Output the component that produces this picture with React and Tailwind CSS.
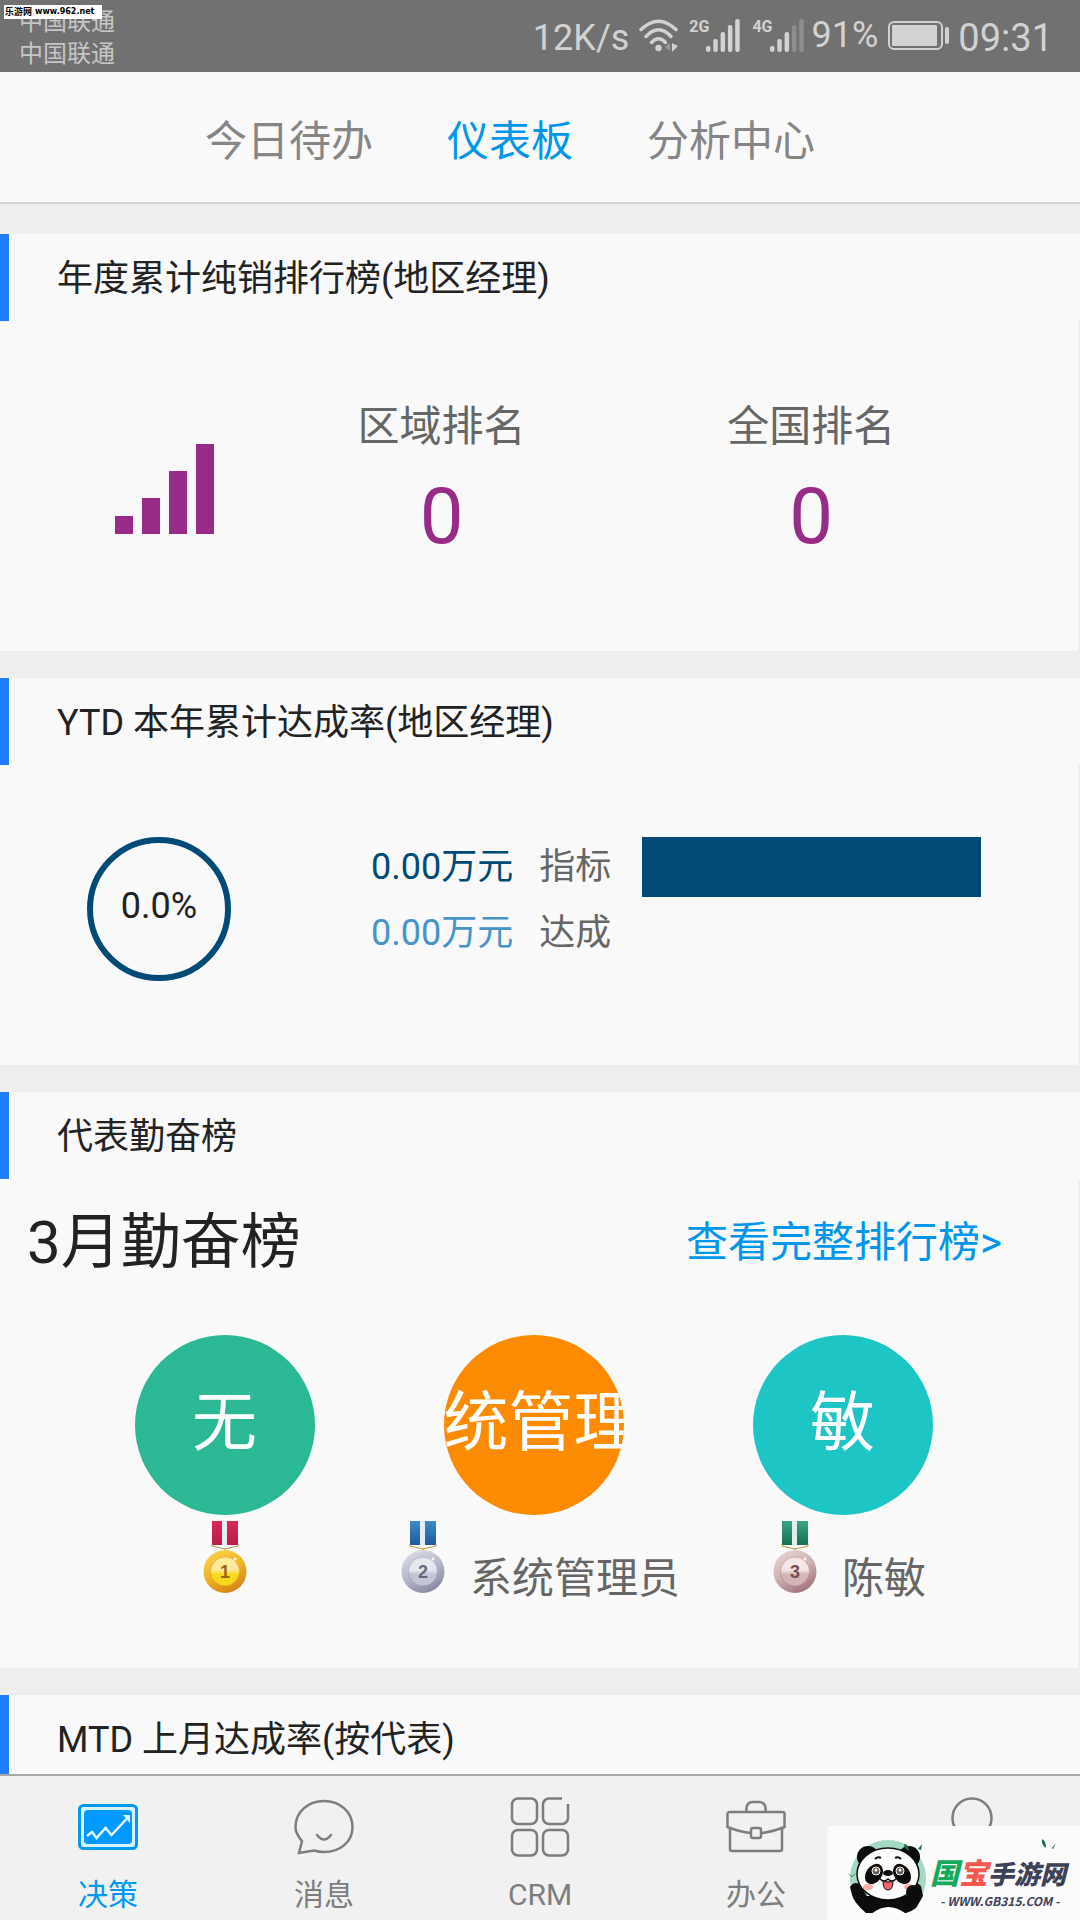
import React, { useState } from 'react';

const tabs = ['今日待办', '仪表板', '分析中心'];

const reps = [
  { rank: 1, initial: '无', name: '', circle: 'bg-[#2bb894]' },
  { rank: 2, initial: '统管理员', name: '系统管理员', circle: 'bg-[#fd8b01]' },
  { rank: 3, initial: '敏', name: '陈敏', circle: 'bg-[#1dc5c5]' },
];

const medalColors = {
  1: { ribbonTop: '#d9285c', ribbonEnd: '#b81d4b', light: '#fbd44c', mid: '#f0b323', dark: '#d5811b', inner: '#f6d91b', innerTop: '#fdeb9a', digit: '#a0621a' },
  2: { ribbonTop: '#3c8cc8', ribbonEnd: '#1c5a9c', light: '#dcdde8', mid: '#b7b8cb', dark: '#85869e', inner: '#c3c5d6', innerTop: '#e6e8f0', digit: '#66687c' },
  3: { ribbonTop: '#3aa485', ribbonEnd: '#14714f', light: '#e6d6d4', mid: '#cdb0b0', dark: '#a26f7c', inner: '#d3b6b6', innerTop: '#f3e6e4', digit: '#7b4c52' },
};

function Medal({ rank }) {
  const c = medalColors[rank];
  return (
    <svg className="w-[72px] h-[72px] shrink-0" viewBox="0 0 72 72" role="img" aria-label={`第${rank}名`}>
      <defs>
        <linearGradient id={`ribbon${rank}`} x1="0" y1="0" x2="0" y2="1">
          <stop offset="0" stopColor={c.ribbonTop} />
          <stop offset="1" stopColor={c.ribbonEnd} />
        </linearGradient>
        <linearGradient id={`disc${rank}`} x1="0.2" y1="0" x2="0.7" y2="1">
          <stop offset="0" stopColor={c.light} />
          <stop offset="0.5" stopColor={c.mid} />
          <stop offset="1" stopColor={c.dark} />
        </linearGradient>
        <linearGradient id={`inner${rank}`} x1="0" y1="0" x2="0" y2="1">
          <stop offset="0" stopColor={c.innerTop} />
          <stop offset="0.45" stopColor={c.innerTop} />
          <stop offset="0.6" stopColor={c.inner} />
          <stop offset="1" stopColor={c.inner} />
        </linearGradient>
      </defs>
      <rect x="23" y="0" width="26" height="24" fill={`url(#ribbon${rank})`} />
      <rect x="33" y="0" width="5" height="24" fill="#e4ecef" />
      <path d="M23 23v2l13 3 13-3v-2M36 27v3" fill="none" stroke="#b99a4a" strokeWidth="1" />
      <circle cx="36" cy="50.500" r="21.500" fill={`url(#disc${rank})`} />
      <circle cx="36" cy="50.500" r="14.500" fill={`url(#inner${rank})`} stroke={c.dark} strokeOpacity="0.4" strokeWidth="1" />
      <circle cx="46" cy="38" r="1.500" fill="#fff" fillOpacity="0.9" />
      <text x="36" y="57" textAnchor="middle" fontSize="18" fontWeight="700" fontFamily="Liberation Sans, sans-serif" fill={c.digit}>{rank}</text>
    </svg>
  );
}

function Signal({ label, level }) {
  const bars = [6, 13, 20, 27, 33];
  return (
    <div className="flex items-start">
      <span className="text-[16px] leading-[16px] font-bold">{label}</span>
      <svg className="w-[34px] h-[33px] -ml-[3px]" viewBox="0 0 34 33" aria-hidden="true">
        {bars.map((h, i) => (
          <rect key={h} x={i * 7.3} y={33 - h} width="4.500" height={h} rx="2" fill="currentColor" fillOpacity={i < level ? 1 : 0.3} />
        ))}
      </svg>
    </div>
  );
}

function StatusBar() {
  return (
    <header className="relative flex justify-between h-[72px] shrink-0 bg-[#717171] text-[#d2d2d2] pl-[19px] pr-[27px]">
      <div className="pt-[6px] text-[24px] leading-[32px] text-[#c6c6c6]">
        <p>中国联通</p>
        <p>中国联通</p>
      </div>
      <div className="absolute left-[4px] top-[5px] flex items-center gap-[3px] h-[14px] w-[98px] pl-px bg-white text-black text-[9px] leading-[14px] font-bold whitespace-nowrap font-['DejaVu_Sans','Noto_Sans_CJK_SC',sans-serif]">
        <span>乐游网</span>
        <span className="text-[8px]">www.962.net</span>
      </div>
      <div className="flex items-start pt-[19px]">
        <span className="text-[36px] leading-[38px] mr-[10px]">12K/s</span>
        <svg className="w-10 h-[33px] mr-[10px]" viewBox="0 0 40 33" fill="none" stroke="currentColor" strokeWidth="3.500" strokeLinecap="round" aria-hidden="true">
          <path d="M2 10.500Q19.500-6 37 10.500" />
          <path d="M7 17.500Q19.500 4 32 17.500" />
          <path d="M12.500 23.500Q19.500 16 26.500 23.500" />
          <circle cx="19.500" cy="29" r="3.200" fill="currentColor" stroke="none" />
          <path d="M31 24v8l-5-4z" fill="#999" stroke="none" />
          <path d="M33 24v9l6-6z" fill="currentColor" stroke="none" />
        </svg>
        <Signal label="2G" level={5} />
        <div className="w-3" />
        <Signal label="4G" level={3} />
        <span className="text-[36px] leading-[32px] ml-2 mr-[10px]">91%</span>
        <svg className="w-[61px] h-[33px] mr-[9px]" viewBox="0 0 61 33" fill="none" aria-hidden="true">
          <rect x="1" y="3" width="53" height="27" rx="5" stroke="currentColor" strokeWidth="2" />
          <rect x="4" y="6" width="45" height="21" rx="1" fill="currentColor" />
          <rect x="57" y="8" width="4" height="17" rx="2" fill="currentColor" />
        </svg>
        <span className="text-[38px] leading-[38px]">09:31</span>
      </div>
    </header>
  );
}

function Section({ title, children }) {
  return (
    <section>
      <div className="flex items-center h-[87px] border-l-[9px] border-[#217dfa] bg-[#f9f9f9] pl-12 pt-[2px]">
        <h2 className="text-[36px] leading-[48px] text-[#222]">{title}</h2>
      </div>
      {children && <div className="mr-[2px] bg-[#f9f9f9]">{children}</div>}
    </section>
  );
}

function Ranking({ label, value }) {
  return (
    <div className="col-span-2 text-center">
      <p className="text-[42px] leading-[60px] text-[#666]">{label}</p>
      <p className="text-[78px] leading-[120px] text-[#982b86]">{value}</p>
    </div>
  );
}

function NavItem({ label, active, onClick, children }) {
  return (
    <button
      type="button"
      onClick={onClick}
      aria-label={label || '我的'}
      className={`flex-1 flex flex-col items-center pt-[21px] ${active ? 'text-[#0099f2]' : 'text-[#7d7d7d]'}`}
    >
      <svg className="w-[60px] h-[60px]" viewBox="0 0 60 60" fill="none" stroke="currentColor" strokeWidth="2.500" aria-hidden="true">
        {children}
      </svg>
      <span className="mt-[17px] text-[30px] leading-[42px]">{label}</span>
    </button>
  );
}

function Panda() {
  return (
    <svg className="w-[80px] h-[80px] shrink-0" viewBox="0 0 80 80" aria-hidden="true">
      <defs>
        <clipPath id="badge"><path d="M0 0h80v60Q70 74 60 76H20Q8 66 5 56L0 40z" /></clipPath>
      </defs>
      <path d="M8 58A38 38 0 1 1 76 58z" fill="#a5d9c2" />
      <g clipPath="url(#badge)">
        <circle cx="22" cy="20" r="11" fill="#0c0c0c" />
        <circle cx="63" cy="20" r="11" fill="#0c0c0c" />
        <path d="M4 50q4-6 9-3l8 12h40l3-10q6-6 11 0l2 10-8 14-9 7H22L8 66z" fill="#0c0c0c" />
        <path d="M22 80q20-20 42 0z" fill="#fff" />
      </g>
      <ellipse cx="42" cy="37" rx="31" ry="26" fill="#fefefe" stroke="#0c0c0c" strokeWidth="1.500" />
      <ellipse cx="28" cy="37" rx="8" ry="11" fill="#0c0c0c" transform="rotate(35 28 37)" />
      <ellipse cx="56" cy="37" rx="8" ry="11" fill="#0c0c0c" transform="rotate(-35 56 37)" />
      <circle cx="30" cy="34" r="4" fill="#6b5a50" stroke="#fff" strokeWidth="1" />
      <circle cx="54" cy="34" r="4" fill="#6b5a50" stroke="#fff" strokeWidth="1" />
      <circle cx="30" cy="33" r="1.500" fill="#fff" />
      <circle cx="54" cy="33" r="1.500" fill="#fff" />
      <path d="M29 22q3-3 6-1M49 21q3-2 6 1" stroke="#0c0c0c" strokeWidth="2" fill="none" />
      <ellipse cx="42" cy="36" rx="5" ry="3" fill="#0c0c0c" />
      <path d="M34 42q4 4 8 0 4 4 8 0" stroke="#0c0c0c" strokeWidth="1.500" fill="none" />
      <path d="M37 44q5 2 10 0 0 9-5 9t-5-9z" fill="#e8626b" stroke="#0c0c0c" strokeWidth="1" />
      <ellipse cx="22" cy="50" rx="5" ry="3" fill="#f7a9a6" />
      <ellipse cx="63" cy="50" rx="5" ry="3" fill="#f7a9a6" />
      <circle cx="67" cy="55" r="7" fill="#0c0c0c" />
      <path d="M58 7q5 1 5 7-5-2-5-7zM72 12l4-5-1 6zM1 36l5 3 5-4-5 5z" fill="#1d6b4a" />
    </svg>
  );
}

export default function App() {
  const [tab, setTab] = useState('仪表板');
  const [nav, setNav] = useState('决策');

  return (
    <div className="relative flex flex-col h-screen overflow-hidden bg-[#eee] font-['Roboto','Noto_Sans_CJK_SC',sans-serif]">
      <StatusBar />

      <nav className="flex items-center gap-[74px] h-[132px] shrink-0 pl-[205px] pt-[10px] bg-[#f9f9f9] border-b-2 border-[#d4d4d4]">
        {tabs.map((name) => (
          <button
            key={name}
            type="button"
            onClick={() => setTab(name)}
            className={`text-[42px] leading-[60px] ${tab === name ? 'text-[#0096ea]' : 'text-[#858585]'}`}
          >
            {name}
          </button>
        ))}
      </nav>

      <main className="flex-1 min-h-0 overflow-y-auto [scrollbar-width:none] pt-[30px] space-y-[27px]">
        <Section title="年度累计纯销排行榜(地区经理)">
          <div className="grid grid-cols-5 h-[330px] pt-[76px] pl-[72px] pr-[82px]">
            <svg className="w-[99px] h-[90px] mt-[47px] justify-self-center" viewBox="0 0 99 90" fill="#982b86" aria-hidden="true">
              <rect x="0" y="72" width="18" height="18" />
              <rect x="27" y="54" width="18" height="36" />
              <rect x="54" y="27" width="18" height="63" />
              <rect x="81" y="0" width="18" height="90" />
            </svg>
            <Ranking label="区域排名" value="0" />
            <Ranking label="全国排名" value="0" />
          </div>
        </Section>

        <Section title="YTD 本年累计达成率(地区经理)">
          <div className="flex items-start h-[300px] pt-[72px] pl-[87px]">
            <div className="flex items-center justify-center w-36 h-36 mr-[140px] rounded-full border-[6px] border-[#004a76] text-[36px] leading-[48px] text-[#222] pb-[6px]">
              0.0%
            </div>
            <div className="grid grid-cols-[auto_auto_339px] gap-y-[6px] text-[36px] leading-[60px] text-[#666]">
              <span className="text-[#004a76] mr-[26px]">0.00万元</span>
              <span className="mr-[31px]">指标</span>
              <div className="bg-[#004a76]" />
              <span className="text-[#4795c6] mr-[26px]">0.00万元</span>
              <span>达成</span>
            </div>
          </div>
        </Section>

        <Section title="代表勤奋榜">
          <div className="h-[489px]">
            <div className="flex items-center justify-between pt-[24px] pl-[27px] pr-[76px]">
              <h3 className="text-[60px] leading-[80px] text-[#222]">3月勤奋榜</h3>
              <a href="#ranking" className="text-[42px] leading-[60px] text-[#0096ea]">查看完整排行榜&gt;</a>
            </div>
            <div className="grid grid-cols-3 pt-[52px] pl-[70px] pr-[81px]">
              {reps.map((rep) => (
                <div key={rep.rank} className="flex flex-col items-center">
                  <div className={`w-[180px] h-[180px] overflow-hidden rounded-full text-center whitespace-nowrap text-[65px] leading-[176px] text-white ${rep.circle}`}>
                    {rep.initial}
                  </div>
                  <div className="flex items-end gap-[11px] pt-[6px]">
                    <Medal rank={rep.rank} />
                    {rep.name && <span className="text-[42px] leading-[28px] text-[#666]">{rep.name}</span>}
                  </div>
                </div>
              ))}
            </div>
          </div>
        </Section>

        <Section title="MTD 上月达成率(按代表)" />
      </main>

      <nav className="flex h-[146px] shrink-0 bg-[#f1f1f1] border-t-2 border-[#a9a9a9]">
        <NavItem label="决策" active={nav === '决策'} onClick={() => setNav('决策')}>
          <rect x="1.500" y="8.500" width="57" height="43" rx="4" fill="#d8f2ff" stroke="#0099f2" strokeWidth="3" />
          <rect x="6" y="13" width="48" height="34" rx="4" fill="#0099ff" stroke="none" />
          <path d="M9 39l5-4 4.500 6 9-10 6 7 15-16" stroke="#e6f8ff" />
          <path d="M45 18h7v8z" fill="#e6f8ff" stroke="none" />
        </NavItem>
        <NavItem label="消息" active={nav === '消息'} onClick={() => setNav('消息')}>
          <path d="M5 56l3-12C3.500 39 1.500 35 1.500 30 1.500 15 14 4 30 4s28.500 11 28.500 26S46 55 30 55c-4 0-7-.5-10-1.500z" />
          <path d="M23 38q7 9 14 0" strokeLinecap="round" />
        </NavItem>
        <NavItem label="CRM" active={nav === 'CRM'} onClick={() => setNav('CRM')}>
          <rect x="2" y="1.500" width="25" height="25.500" rx="6" />
          <rect x="2" y="33" width="25" height="25.500" rx="6" />
          <rect x="33" y="33" width="25" height="25.500" rx="6" />
          <path d="M52 1.500H39a6 6 0 0 0-6 6V21a6 6 0 0 0 6 6h13a6 6 0 0 0 6-6V7" />
        </NavItem>
        <NavItem label="办公" active={nav === '办公'} onClick={() => setNav('办公')}>
          <path d="M4 31v21a2 2 0 0 0 2 2h48a2 2 0 0 0 2-2V31" />
          <path d="M25 36Q14 35 1.500 30V17a2 2 0 0 1 2-2h53a2 2 0 0 1 2 2v13Q46 35 35 36" />
          <path d="M20.500 15v-4a6 6 0 0 1 6-6h7a6 6 0 0 1 6 6v4" />
          <rect x="25" y="31" width="10" height="10" rx="2" />
        </NavItem>
        <NavItem active={nav === '我的'} onClick={() => setNav('我的')}>
          <circle cx="30" cy="21" r="19.500" />
          <path d="M3 59q4-18 27-18t27 18" />
        </NavItem>
      </nav>

      <div className="absolute right-0 bottom-0 flex items-start w-[253px] h-[94px] pl-[19px] pt-[11px] overflow-hidden rounded-tl bg-[#fbfbfb]">
        <Panda />
        <div className="relative pl-[4px] pt-[16px] whitespace-nowrap font-['Noto_Sans_CJK_SC',sans-serif] font-black italic">
          <svg className="absolute right-[6px] top-[-5px] w-5 h-5" viewBox="0 0 20 20" fill="#1d6b4a" aria-hidden="true">
            <path d="M2 7q4 2 4 9-5-3-4-9zM9 14l3 2 4-5-3 6z" />
          </svg>
          <div className="flex items-baseline leading-[36px] text-[#3d4257]">
            <span className="text-[29px] text-[#15aa5b]">国</span>
            <span className="text-[29px] text-[#f4584f]">宝</span>
            <span className="text-[26px]">手游网</span>
          </div>
          <p className="pl-[10px] pt-[3px] text-[12px] leading-[14px] font-bold text-[#3d4257]">- WWW.GB315.COM -</p>
        </div>
      </div>
    </div>
  );
}
